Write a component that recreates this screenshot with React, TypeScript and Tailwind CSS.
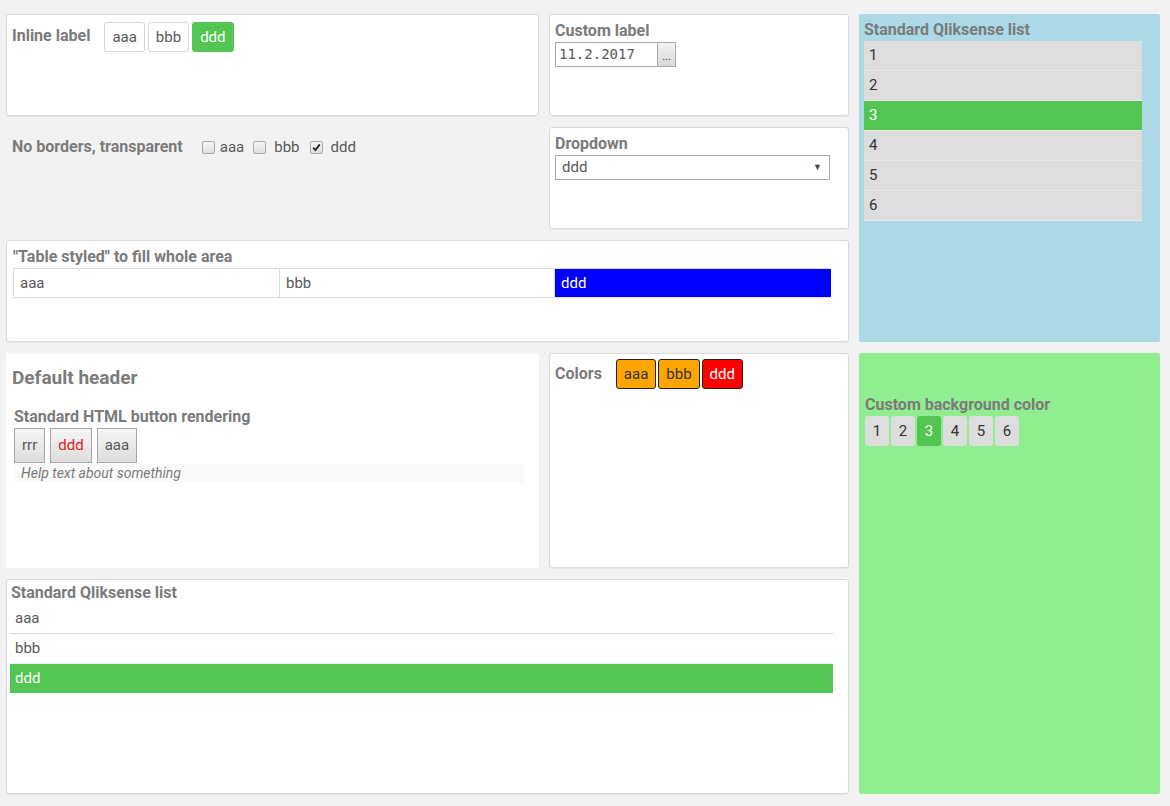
const panel = 'bg-white border border-[#d9d9d9] rounded-[3px] shadow-[0_1px_1px_rgba(0,0,0,0.05)]'
const label = 'font-bold text-[16px] leading-[18px] text-[#7b7b7b]'
const green = 'bg-[#52c552]'

function Check({ checked }: { checked?: boolean }) {
  return (
    <span className="inline-flex h-[13px] w-[13px] items-center justify-center rounded-[2px] border border-[#a8a8a8] bg-gradient-to-b from-[#f6f6f6] to-[#dedede]">
      {checked && (
        <svg width="9" height="9" viewBox="0 0 9 9">
          <path d="M1.2 4.6 L3.5 7 L7.8 1.4" fill="none" stroke="#222" strokeWidth="1.8" />
        </svg>
      )}
    </span>
  )
}

function InlineButtons() {
  const items = ['aaa', 'bbb', 'ddd']
  return (
    <div className="flex gap-[3px]">
      {items.map((t, i) => (
        <div
          key={t}
          className={`flex h-[30px] items-center rounded-[3px] border px-[7px] text-[15px] ${
            i === 2 ? `${green} border-[#52c552] text-white` : 'border-[#d6d6d6] bg-white text-[#595959]'
          }`}
        >
          {t}
        </div>
      ))}
    </div>
  )
}

export default function App() {
  return (
    <div className="min-h-[806px] bg-[#f2f2f2] pl-[6px] pt-[14px] font-['Roboto','Liberation_Sans',sans-serif]">
      <div className="grid grid-cols-[533px_300px_301px] grid-rows-[102px_102px_102px_102px_102px_102px_102px] gap-x-[10px] gap-y-[11px]">
        {/* Inline label */}
        <div className={`${panel} col-start-1 row-start-1 flex items-start gap-[14px] px-[5px] pt-[7px]`}>
          <span className={`${label} pt-[5px]`}>Inline label</span>
          <InlineButtons />
        </div>

        {/* Custom label */}
        <div className={`${panel} col-start-2 row-start-1 px-[5px] pt-[7px]`}>
          <div className={label}>Custom label</div>
          <div className="mt-[2px] flex">
            <div className="flex h-[25px] w-[103px] items-center border border-[#a9a9a9] bg-white pl-[3px] font-['DejaVu_Sans_Mono',monospace] text-[14px] text-[#595959]">
              11.2.2017
            </div>
            <div className="flex h-[25px] w-[18px] items-end justify-center border border-l-0 border-[#a9a9a9] bg-gradient-to-b from-[#f4f4f4] to-[#d8d8d8] pb-[4px] text-[11px] leading-none text-[#333]">
              ...
            </div>
          </div>
        </div>

        {/* Blue list */}
        <div className="col-start-3 row-span-3 row-start-1 rounded-[2px] bg-[#add8e6] px-[5px] pt-[7px]">
          <div className={label}>Standard Qliksense list</div>
          <div className="mt-[2px] w-[278px]">
            {['1', '2', '3', '4', '5', '6'].map((n) => (
              <div
                key={n}
                className={`flex h-[30px] items-center border-b border-[#e8e8e8] pl-[5px] text-[15px] ${
                  n === '3' ? `${green} text-white` : 'bg-[#dddddd] text-[#333]'
                }`}
              >
                {n}
              </div>
            ))}
          </div>
        </div>

        {/* No borders, transparent */}
        <div className="col-start-1 row-start-2 flex items-center gap-[19px] self-start px-[6px] pt-[9px]">
          <span className={label}>No borders, transparent</span>
          <div className="flex items-center text-[15px] text-[#595959]">
            <Check />
            <span className="ml-[5px] mr-[9px]">aaa</span>
            <Check />
            <span className="ml-[8px] mr-[10px]">bbb</span>
            <Check checked />
            <span className="ml-[8px]">ddd</span>
          </div>
        </div>

        {/* Dropdown */}
        <div className={`${panel} col-start-2 row-start-2 px-[5px] pt-[7px]`}>
          <div className={label}>Dropdown</div>
          <div className="mt-[2px] flex h-[25px] w-[275px] items-center justify-between border border-[#a9a9a9] bg-white pl-[6px] pr-[7px] text-[15px] text-[#595959]">
            <span>ddd</span>
            <span className="text-[9px] text-[#444]">▼</span>
          </div>
        </div>

        {/* Table styled */}
        <div className={`${panel} col-span-2 col-start-1 row-start-3 px-[6px] pt-[7px]`}>
          <div className={label}>"Table styled" to fill whole area</div>
          <div className="mt-[2px] grid w-[817px] grid-cols-[266px_275px_276px] border border-[#dcdcdc] text-[15px]">
            <div className="flex h-[28px] items-center border-r border-[#dcdcdc] pl-[6px] text-[#595959]">aaa</div>
            <div className="flex h-[28px] items-center border-r border-[#dcdcdc] pl-[6px] text-[#595959]">bbb</div>
            <div className="flex h-[28px] items-center bg-[#0000ff] pl-[6px] text-white">ddd</div>
          </div>
        </div>

        {/* Default header */}
        <div className="col-start-1 row-span-2 row-start-4 bg-white px-[6px] pt-[13px]">
          <div className="text-[19px] font-bold leading-[24px] text-[#7b7b7b]">Default header</div>
          <div className="px-[2px] pt-[18px]">
            <div className={label}>Standard HTML button rendering</div>
            <div className="mt-[2px] flex gap-[5px]">
              {[
                { t: 'rrr', c: 'text-[#595959]' },
                { t: 'ddd', c: 'text-[#e02020]' },
                { t: 'aaa', c: 'text-[#595959]' },
              ].map((b) => (
                <div
                  key={b.t}
                  className={`flex h-[35px] items-center border border-[#a6a6a6] bg-gradient-to-b from-[#f6f6f6] to-[#dddddd] px-[7px] text-[15px] ${b.c}`}
                >
                  {b.t}
                </div>
              ))}
            </div>
            <div className="mt-[1px] flex h-[19px] w-[510px] items-center bg-[#fafafa] pl-[7px] text-[14px] italic text-[#7b7b7b]">
              Help text about something
            </div>
          </div>
        </div>

        {/* Colors */}
        <div className={`${panel} col-start-2 row-span-2 row-start-4 flex items-start gap-[14px] px-[5px] pt-[5px]`}>
          <span className={`${label} pt-[6px]`}>Colors</span>
          <div className="flex gap-[2px]">
            {[
              { t: 'aaa', c: 'bg-[#ffa500] text-[#333]' },
              { t: 'bbb', c: 'bg-[#ffa500] text-[#333]' },
              { t: 'ddd', c: 'bg-[#ff0000] text-white' },
            ].map((b) => (
              <div
                key={b.t}
                className={`flex h-[30px] items-center rounded-[3px] border border-[#222] px-[7px] text-[15px] ${b.c}`}
              >
                {b.t}
              </div>
            ))}
          </div>
        </div>

        {/* Green panel */}
        <div className="col-start-3 row-span-4 row-start-4 rounded-[2px] bg-[#90ee90] px-[6px] pt-[43px]">
          <div className={label}>Custom background color</div>
          <div className="mt-[2px] flex gap-[2px]">
            {['1', '2', '3', '4', '5', '6'].map((n) => (
              <div
                key={n}
                className={`flex h-[30px] w-[24px] items-center justify-center rounded-[3px] text-[15px] ${
                  n === '3' ? `${green} text-white` : 'bg-[#dddddd] text-[#333]'
                }`}
              >
                {n}
              </div>
            ))}
          </div>
        </div>

        {/* Bottom list */}
        <div className={`${panel} col-span-2 col-start-1 row-span-2 row-start-6 px-[3px] pt-[4px]`}>
          <div className={`${label} pl-[1px]`}>Standard Qliksense list</div>
          <div className="mt-[2px] w-[823px] text-[15px]">
            <div className="flex h-[30px] items-center border-b border-[#dddddd] pl-[5px] text-[#595959]">aaa</div>
            <div className="flex h-[30px] items-center border-b border-[#eeeeee] pl-[5px] text-[#595959]">bbb</div>
            <div className={`flex h-[29px] items-center pl-[5px] text-white ${green}`}>ddd</div>
          </div>
        </div>
      </div>
    </div>
  )
}
